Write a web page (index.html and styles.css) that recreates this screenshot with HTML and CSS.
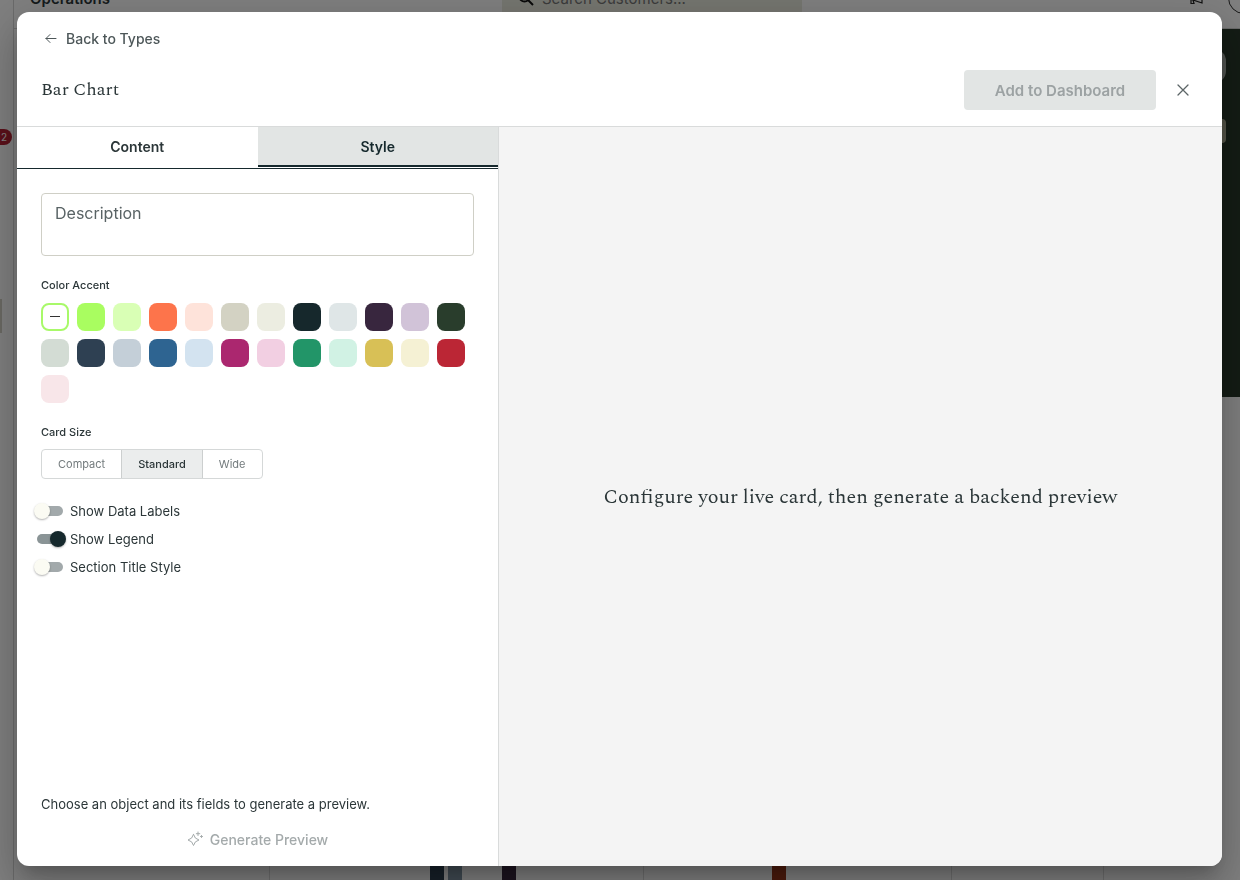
FILE: index.html
```html
<!DOCTYPE html>
<html lang="en">
<head>
    <meta charset="UTF-8">
    <meta name="viewport" content="width=device-width, initial-scale=1.0">
    <title>Bar Chart</title>
    <link rel="stylesheet" href="styles.css">
</head>
<body>
    <!-- Dashboard behind the dialog -->
    <div class="page" aria-hidden="true">
        <div class="sidebar">
            <span class="nav-badge">2</span>
            <span class="nav-handle"></span>
        </div>
        <div class="main">
            <div class="topbar">
                <div class="page-name">Operations</div>
                <div class="search">
                    <svg width="16" height="16" viewBox="0 0 16 16" fill="none" stroke="#111" stroke-width="2">
                        <circle cx="6.5" cy="6.5" r="5"/>
                        <path d="M10 10l5 5"/>
                    </svg>
                    <span>Search Customers...</span>
                </div>
                <div class="topbar-icons">
                    <svg width="16" height="16" viewBox="0 0 16 16" fill="none" stroke="#222" stroke-width="1.2">
                        <path d="M2 4v5l12 4V0L2 4zM3 9.500v4h3l-1-3.500"/>
                    </svg>
                    <span class="avatar"></span>
                </div>
            </div>
            <div class="hero">
                <span class="hero-pill"></span>
                <span class="hero-tag"></span>
            </div>
            <div class="board">
                <div class="board-col"></div>
                <div class="board-col bars">
                    <i class="bar bar-navy"></i>
                    <i class="bar bar-slate"></i>
                    <i class="bar bar-plum"></i>
                </div>
                <div class="board-col bars bars-right">
                    <i class="bar bar-rust"></i>
                </div>
                <div class="board-col"></div>
                <div class="board-col"></div>
            </div>
        </div>
    </div>

    <div class="overlay">
        <div class="dialog" role="dialog" aria-labelledby="dialogTitle">
            <header class="dialog-header">
                <button class="back-btn" type="button">
                    <svg width="12" height="12" viewBox="0 0 12 12" fill="none" stroke="currentColor" stroke-linecap="round" stroke-linejoin="round">
                        <path d="M11 6.500H1M5 2.500l-4 4 4 4"/>
                    </svg>
                    Back to Types
                </button>
                <div class="title-row">
                    <h1 id="dialogTitle">Bar Chart</h1>
                    <button class="add-btn" type="button" disabled>Add to Dashboard</button>
                    <button class="close-btn" type="button" aria-label="Close">
                        <svg width="14" height="14" viewBox="0 0 14 14" fill="none" stroke="currentColor" stroke-width="1.3" stroke-linecap="round">
                            <path d="M2 2l10 10M12 2L2 12"/>
                        </svg>
                    </button>
                </div>
            </header>

            <div class="dialog-body">
                <section class="config">
                    <div class="tabs" role="tablist">
                        <button class="tab" type="button" role="tab" aria-selected="false">Content</button>
                        <button class="tab active" type="button" role="tab" aria-selected="true">Style</button>
                    </div>

                    <div class="config-form">
                        <textarea class="description" placeholder="Description" aria-label="Description"></textarea>

                        <div class="field">
                            <div class="field-label">Color Accent</div>
                            <div class="swatches">
                                <button class="swatch none" type="button" aria-label="None">
                                    <svg width="10" height="10" viewBox="0 0 10 10" stroke="#333" stroke-width="1"><path d="M0 4.500h10"/></svg>
                                </button>
                                <button class="swatch lime" type="button" aria-label="Lime"></button>
                                <button class="swatch lime-light" type="button" aria-label="Light lime"></button>
                                <button class="swatch coral" type="button" aria-label="Coral"></button>
                                <button class="swatch coral-light" type="button" aria-label="Light coral"></button>
                                <button class="swatch sand" type="button" aria-label="Sand"></button>
                                <button class="swatch sand-light" type="button" aria-label="Light sand"></button>
                                <button class="swatch ink" type="button" aria-label="Ink"></button>
                                <button class="swatch ink-light" type="button" aria-label="Light ink"></button>
                                <button class="swatch plum" type="button" aria-label="Plum"></button>
                                <button class="swatch plum-light" type="button" aria-label="Light plum"></button>
                                <button class="swatch forest" type="button" aria-label="Forest"></button>
                                <button class="swatch forest-light" type="button" aria-label="Light forest"></button>
                                <button class="swatch navy" type="button" aria-label="Navy"></button>
                                <button class="swatch navy-light" type="button" aria-label="Light navy"></button>
                                <button class="swatch blue" type="button" aria-label="Blue"></button>
                                <button class="swatch blue-light" type="button" aria-label="Light blue"></button>
                                <button class="swatch magenta" type="button" aria-label="Magenta"></button>
                                <button class="swatch magenta-light" type="button" aria-label="Light magenta"></button>
                                <button class="swatch green" type="button" aria-label="Green"></button>
                                <button class="swatch green-light" type="button" aria-label="Light green"></button>
                                <button class="swatch gold" type="button" aria-label="Gold"></button>
                                <button class="swatch gold-light" type="button" aria-label="Light gold"></button>
                                <button class="swatch red" type="button" aria-label="Red"></button>
                                <button class="swatch red-light" type="button" aria-label="Light red"></button>
                            </div>
                        </div>

                        <div class="field">
                            <div class="field-label">Card Size</div>
                            <div class="segmented">
                                <button type="button">Compact</button>
                                <button class="selected" type="button">Standard</button>
                                <button type="button">Wide</button>
                            </div>
                        </div>

                        <div class="switches">
                            <div class="switch-row">
                                <input class="switch" type="checkbox" role="switch" id="dataLabels">
                                <label for="dataLabels">Show Data Labels</label>
                            </div>
                            <div class="switch-row">
                                <input class="switch" type="checkbox" role="switch" id="showLegend" checked>
                                <label for="showLegend">Show Legend</label>
                            </div>
                            <div class="switch-row">
                                <input class="switch" type="checkbox" role="switch" id="sectionTitle">
                                <label for="sectionTitle">Section Title Style</label>
                            </div>
                        </div>
                    </div>

                    <footer class="config-footer">
                        <p>Choose an object and its fields to generate a preview.</p>
                        <button class="generate-btn" type="button" disabled>
                            <svg width="16" height="16" viewBox="0 0 16 16" fill="none" stroke="currentColor" stroke-linecap="round" stroke-linejoin="round">
                                <path d="M6.500 3.500Q7.500 8 12 9Q7.500 10 6.500 14.500Q5.500 10 1 9Q5.500 8 6.500 3.500z"/>
                                <path d="M11 1v3.500M9.300 2.700h3.500M14.500 4.500v2M13.500 5.500h2"/>
                            </svg>
                            Generate Preview
                        </button>
                    </footer>
                </section>

                <section class="preview">
                    <p>Configure your live card, then generate a backend preview</p>
                </section>
            </div>
        </div>
    </div>
</body>
</html>
```
FILE: styles.css
```css
* {
    box-sizing: border-box;
}
body {
    margin: 0;
    height: 100vh;
    overflow: hidden;
    font-family: Inter, "Liberation Sans", sans-serif;
    color: #2b3638;
    background-color: #fff;
}
button {
    font-family: inherit;
    margin: 0;
    padding: 0;
    border: none;
    background: none;
    cursor: pointer;
}
button:disabled {
    cursor: default;
}
p, h1 {
    margin: 0;
    font-weight: normal;
}

/* dashboard behind the dialog */
.page {
    display: flex;
    height: 100vh;
}
.sidebar {
    width: 14px;
    flex-shrink: 0;
    border-right: 1px solid #d5d5d5;
    display: flex;
    flex-direction: column;
    align-items: flex-start;
}
.nav-badge {
    margin: 129px 0 0 -8px;
    width: 20px;
    height: 16px;
    border-radius: 8px;
    background-color: #b52033;
    color: #fff;
    font-size: 10px;
    line-height: 16px;
    text-align: center;
    padding-left: 4px;
}
.nav-handle {
    margin-top: 154px;
    width: 2px;
    height: 34px;
    background-color: #d4d2c6;
}
.main {
    flex: 1;
    min-width: 0;
    display: flex;
    flex-direction: column;
}
.topbar {
    margin-top: -32px;
    height: 61px;
    flex-shrink: 0;
    display: flex;
    align-items: center;
    padding-left: 16px;
    border-bottom: 1px solid #d5d5d5;
}
.page-name {
    flex: 1;
    font-size: 15px;
    font-weight: 600;
}
.search {
    width: 300px;
    height: 36px;
    display: flex;
    align-items: center;
    gap: 8px;
    padding-left: 16px;
    background-color: #ebece0;
    font-size: 15px;
    color: #777;
}
.topbar-icons {
    width: 438px;
    display: flex;
    justify-content: flex-end;
    align-items: center;
    gap: 24px;
}
.avatar {
    width: 32px;
    height: 32px;
    margin-right: -20px;
    border: 1px solid #333;
    border-radius: 50%;
}
.hero {
    height: 368px;
    flex-shrink: 0;
    margin-left: 16px;
    background-color: #28382a;
    display: flex;
    flex-direction: column;
    align-items: flex-end;
    gap: 36px;
    padding: 20px 14px 0 0;
}
.hero-pill {
    width: 60px;
    height: 34px;
    border-radius: 12px;
    background-color: #a2a8a2;
}
.hero-tag {
    width: 60px;
    height: 24px;
    border-radius: 4px;
    background-color: #a8a890;
}
.board {
    flex: 1;
    display: grid;
    grid-template-columns: 256fr 374fr 308fr 152fr 136fr;
}
.board-col {
    border-right: 1px solid #ddd;
}
.board-col:last-child {
    border-right: none;
}
.bars {
    display: flex;
    align-items: flex-end;
    justify-content: flex-end;
    gap: 4px;
    padding-right: 127px;
}
.bars-right {
    padding-right: 165px;
}
.bar {
    width: 14px;
    height: 60px;
}
.bar-navy { background-color: #2e4052; }
.bar-slate { background-color: #8095a5; }
.bar-plum { background-color: #38263e; margin-left: 36px; }
.bar-rust { background-color: #9a3519; }

/* dialog */
.overlay {
    position: fixed;
    inset: 0;
    display: flex;
    padding: 12px 18px 14px 17px;
    background-color: rgba(0, 0, 0, 0.5);
}
.dialog {
    flex: 1;
    min-width: 0;
    display: flex;
    flex-direction: column;
    overflow: hidden;
    border-radius: 12px;
    background-color: #fff;
    box-shadow: 0 11px 15px -7px rgba(0, 0, 0, 0.2), 0 24px 38px 3px rgba(0, 0, 0, 0.14), 0 9px 46px 8px rgba(0, 0, 0, 0.12);
}
.dialog-header {
    padding: 15px 24px 16px;
    border-bottom: 1px solid #d9dbdb;
}
.back-btn {
    display: flex;
    align-items: center;
    gap: 9px;
    height: 22px;
    padding-left: 4px;
    font-size: 14px;
    font-weight: 500;
    color: #4d5759;
}
.title-row {
    display: flex;
    align-items: center;
    margin-top: 21px;
}
.title-row h1 {
    flex: 1;
    font-family: Spectral, "Liberation Serif", serif;
    font-size: 18px;
    line-height: 28px;
}
.add-btn {
    height: 40px;
    width: 192px;
    border-radius: 4px;
    background-color: #e2e5e4;
    font-size: 15px;
    font-weight: 600;
    color: #9ca2a3;
}
.close-btn {
    display: flex;
    align-items: center;
    justify-content: center;
    width: 30px;
    height: 30px;
    margin-left: 12px;
    color: #5c6567;
}
.dialog-body {
    flex: 1;
    min-height: 0;
    display: flex;
}
.config {
    width: 40%;
    display: flex;
    flex-direction: column;
    border-right: 1px solid #d9dbdb;
}
.tabs {
    display: flex;
    padding-bottom: 1px;
    border-bottom: 1px solid #16292d;
}
.tab {
    flex: 1;
    height: 40px;
    border-bottom: 2px solid transparent;
    font-size: 14px;
    font-weight: 600;
    color: #2b3638;
}
.tab.active {
    background-color: #e2e5e4;
    border-bottom-color: #16292d;
    color: #16292d;
}
.config-form {
    flex: 1;
    padding: 24px;
}
.description {
    display: block;
    width: 100%;
    height: 63px;
    padding: 7px 13px;
    border: 1px solid #cfcfc6;
    border-radius: 4px;
    resize: none;
    font-family: inherit;
    font-size: 16px;
    line-height: 24px;
    color: #2b3638;
}
.description::placeholder {
    color: #596365;
}
.field {
    margin-top: 21px;
}
.field-label {
    font-size: 11px;
    font-weight: 500;
    line-height: 16px;
}
.swatches {
    display: flex;
    flex-wrap: wrap;
    gap: 8px;
    margin-top: 10px;
}
.swatch {
    display: flex;
    align-items: center;
    justify-content: center;
    width: 28px;
    height: 28px;
    border-radius: 8px;
}
.none { border: 2px solid #a8f969; }
.lime { background-color: #a9fd60; }
.lime-light { background-color: #d9ffb5; }
.coral { background-color: #fd744b; }
.coral-light { background-color: #fee3da; }
.sand { background-color: #d3d2c3; }
.sand-light { background-color: #ecede1; }
.ink { background-color: #16282c; }
.ink-light { background-color: #dfe6e7; }
.plum { background-color: #38263e; }
.plum-light { background-color: #d1c3d8; }
.forest { background-color: #293d2c; }
.forest-light { background-color: #d3dcd4; }
.navy { background-color: #2e4052; }
.navy-light { background-color: #c4cfd8; }
.blue { background-color: #2e6491; }
.blue-light { background-color: #d3e3f0; }
.magenta { background-color: #ab276f; }
.magenta-light { background-color: #f2cfe2; }
.green { background-color: #229568; }
.green-light { background-color: #d1f2e4; }
.gold { background-color: #d8c056; }
.gold-light { background-color: #f5f1d4; }
.red { background-color: #bb2635; }
.red-light { background-color: #f8e6e9; }

.segmented {
    display: inline-flex;
    height: 30px;
    margin-top: 9px;
    border: 1px solid #d5d8d8;
    border-radius: 4px;
    overflow: hidden;
}
.segmented button {
    padding: 0 16px 1px;
    font-size: 11px;
    color: #737b7d;
}
.segmented .selected {
    border-left: 1px solid #cccfcf;
    border-right: 1px solid #cccfcf;
    background-color: #ebeded;
    font-weight: 500;
    color: #2b3638;
}
.switches {
    margin: 18px 0 0 -7px;
}
.switch-row {
    display: flex;
    align-items: center;
    gap: 4px;
    height: 28px;
    font-size: 13px;
}
.switch {
    appearance: none;
    display: flex;
    align-items: center;
    width: 32px;
    height: 16px;
    margin: 0;
    padding: 0 3px;
    cursor: pointer;
}
.switch::before {
    content: "";
    flex: 1;
    height: 10px;
    border-radius: 5px;
    background-color: #a2a9ab;
}
.switch::after {
    content: "";
    width: 16px;
    height: 16px;
    margin: 0 13px 0 -29px;
    border-radius: 50%;
    background-color: #fbfbf3;
    box-shadow: 0 1px 2px rgba(0, 0, 0, 0.3);
}
.switch:checked::before {
    background-color: #8a9496;
}
.switch:checked::after {
    margin: 0 -3px 0 -13px;
    background-color: #16292d;
}
.config-footer {
    padding: 0 24px 15px;
}
.config-footer p {
    font-size: 13px;
    line-height: 20px;
}
.generate-btn {
    display: flex;
    align-items: center;
    justify-content: center;
    gap: 7px;
    width: 100%;
    height: 24px;
    margin-top: 13px;
    font-size: 14px;
    font-weight: 500;
    color: #a4aaab;
}
.preview {
    flex: 1;
    display: flex;
    align-items: center;
    justify-content: center;
    background-color: #f4f4f4;
    font-family: Spectral, "Liberation Serif", serif;
    font-size: 20px;
    line-height: 32px;
}
```
